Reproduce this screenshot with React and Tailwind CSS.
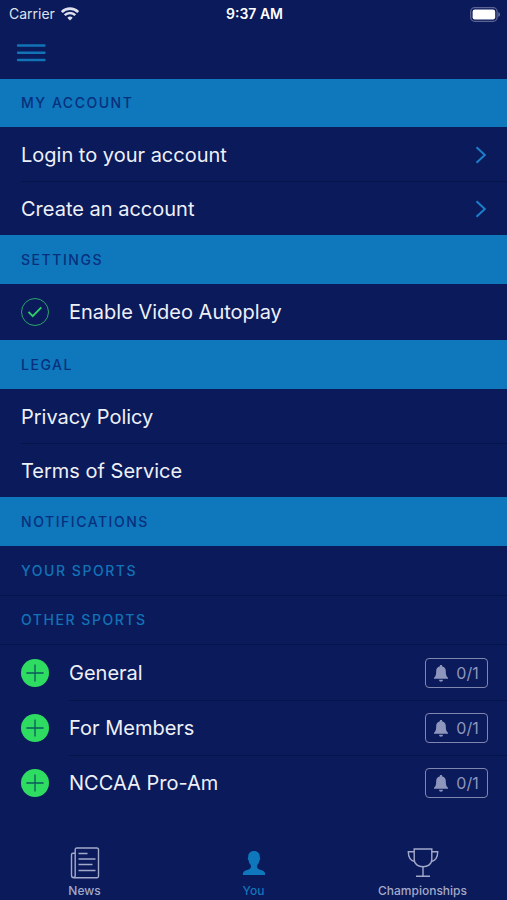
import React from 'react';

const accountLinks = ['Login to your account', 'Create an account'];
const legalLinks = ['Privacy Policy', 'Terms of Service'];
const otherSports = ['General', 'For Members', 'NCCAA Pro-Am'];

const WifiIcon = () => (
    <svg className="w-[18px] h-[14px]" viewBox="0 0 18 14" fill="none" stroke="currentColor" aria-hidden="true">
        <path d="M.8 5a11.600 11.600 0 0 1 16.400 0" strokeWidth="2.600" />
        <path d="M3.700 8.200a7.500 7.500 0 0 1 10.600 0" strokeWidth="2.400" />
        <path d="M9 13.600L6.300 10.800a3.900 3.900 0 0 1 5.400 0z" fill="currentColor" stroke="none" />
    </svg>
);

const BatteryIcon = () => (
    <svg className="w-[30px] h-[15px]" viewBox="0 0 30 15" aria-hidden="true">
        <rect x="0.7" y="0.7" width="26.400" height="13.600" rx="4" fill="none" stroke="#5c6493" strokeWidth="1.300" />
        <rect x="2.600" y="2.600" width="22.600" height="9.800" rx="2.200" fill="#fff" />
        <path d="M28.300 5.200c1.100.3 1.600 1.200 1.600 2.300s-.5 2-1.600 2.300z" fill="#7179a3" />
    </svg>
);

const ChevronIcon = () => (
    <svg className="w-3 h-[18px] text-[#1c7fcb]" viewBox="0 0 12 18" fill="none" stroke="currentColor" strokeWidth="2" aria-hidden="true">
        <path d="M1.500 1.200L9.800 9l-8.300 7.800" />
    </svg>
);

const PlusIcon = () => (
    <svg className="w-7 h-7" viewBox="0 0 28 28" fill="none" aria-hidden="true">
        <circle cx="14" cy="14" r="14" fill="#2fdc62" />
        <path d="M14 5.400v17.200M5.400 14h17.200" stroke="#0d5a5c" strokeWidth="1.300" />
    </svg>
);

const BellIcon = () => (
    <svg className="w-[14px] h-[17px]" viewBox="0 0 14 17" fill="currentColor" aria-hidden="true">
        <path d="M7 0c.8 0 1.300.5 1.300 1.200v.4c2.200.5 3.500 2.100 3.500 4.400 0 3.300.3 5.300 2.200 6.800v.9H0v-.9C1.900 11.300 2.200 9.300 2.200 6c0-2.300 1.300-3.900 3.500-4.400v-.4C5.700.5 6.200 0 7 0z" />
        <path d="M5 14.700h4c0 1.200-.9 2-2 2s-2-.8-2-2z" />
    </svg>
);

const NewsIcon = () => (
    <svg className="w-8 h-8" viewBox="0 0 32 32" fill="none" stroke="currentColor" strokeWidth="1.400" aria-hidden="true">
        <path d="M6.200 6.200H4a1.500 1.500 0 0 0-1.500 1.500v20.600A2.500 2.500 0 0 0 5 30.800h23a1.500 1.500 0 0 0 1.500-1.500V2.500A1.500 1.500 0 0 0 28 1H7.700a1.500 1.500 0 0 0-1.500 1.500v25.800c0 1.600-.7 2.500-1.700 2.500" />
        <path d="M9.500 6.500h9M9.500 12h17M13.500 12h13M9.500 17.500h14M9.500 23.500h17" strokeWidth="1.700" />
    </svg>
);

const PersonIcon = () => (
    <svg className="w-8 h-8" viewBox="0 0 32 32" fill="currentColor" aria-hidden="true">
        <path d="M16 4c4 0 6 2.600 5.800 6.500.7.400.600 2.100-.4 3.100-.4 2-1.200 3.500-2.200 4.500v2.700c.8 1.600 3.300 2 5.300 2.700 2.100.8 2.700 2.300 2.700 4.500H4.800c0-2.200.6-3.700 2.700-4.500 2-.7 4.500-1.100 5.300-2.700v-2.700c-1-1-1.800-2.500-2.200-4.500-1-1-1.100-2.700-.4-3.100C10 6.600 12 4 16 4z" />
    </svg>
);

const TrophyIcon = () => (
    <svg className="w-8 h-8" viewBox="0 0 32 32" fill="none" stroke="currentColor" strokeWidth="1.400" aria-hidden="true">
        <path d="M7.200 2h17.600v10.500c0 4.500-4 7.300-8.800 7.300s-8.800-2.800-8.800-7.300z" />
        <path d="M7.200 4.800H1.300c0 5.200 1.800 8.600 6.200 9.700M24.800 4.800h5.900c0 5.200-1.800 8.600-6.200 9.700" />
        <path d="M16 19.800v9.500M9 29.300h14" />
    </svg>
);

const SectionTitle = ({ children }) => (
    <h2 className="h-[49px] px-[21px] flex items-center bg-[#0f77bc] text-[#07307c] text-sm font-medium tracking-[0.11em]">
        {children}
    </h2>
);

const SubTitle = ({ children }) => (
    <h3 className="h-[49px] px-[21px] flex items-center border-t border-[#07144a] first:border-[#0a1a5a] text-[#1273b7] text-sm font-medium tracking-[0.11em]">
        {children}
    </h3>
);

const LinkList = ({ items, chevron }) => (
    <ul className="pl-[21px]">
        {items.map((item) => (
            <li key={item} className="border-t border-[#07144a] first:border-transparent">
                <a href="#" className="h-[53px] pr-5 flex items-center justify-between">
                    {item}
                    {chevron && <ChevronIcon />}
                </a>
            </li>
        ))}
    </ul>
);

const SportRow = ({ name }) => (
    <li className="flex items-center pl-[21px] group">
        <button type="button" className="shrink-0" aria-label={`Add ${name}`}>
            <PlusIcon />
        </button>
        <div className="ml-5 h-[55px] flex-1 flex items-center justify-between pr-[19px] border-t border-[#07144a] group-first:border-transparent">
            <span>{name}</span>
            <button
                type="button"
                className="w-[63px] h-[30px] flex items-center justify-center gap-2 rounded border-[1px] border-[#7f86b0] text-[#8f96bd] text-base"
                aria-label={`${name} notifications 0/1`}
            >
                <BellIcon />
                0/1
            </button>
        </div>
    </li>
);

const Tab = ({ icon, label, active }) => (
    <a
        href="#"
        className={`flex flex-col items-center text-xs font-medium ${active ? 'text-[#0f77bc]' : 'text-[#a3a9c9]'}`}
        aria-current={active ? 'page' : undefined}
    >
        {icon}
        <span className="mt-1 leading-4">{label}</span>
    </a>
);

const App = () => {
    return (
        <div className="min-h-screen flex flex-col bg-[#0a1a5a] text-[#eef0f8] text-xl font-['Inter','Liberation_Sans',sans-serif]">
            <header className="relative h-[78px] shadow-[0_1px_0_#0a1a5a]">
                <div className="h-7 grid grid-cols-3 items-center pl-[9px] pr-[7px] text-sm text-white">
                    <div className="flex items-center gap-1.5 text-[#dfe2ee]">
                        <span>Carrier</span>
                        <WifiIcon />
                    </div>
                    <span className="text-center font-semibold">9:37 AM</span>
                    <div className="flex justify-end">
                        <BatteryIcon />
                    </div>
                </div>
                <button type="button" className="block ml-4 mt-4 text-[#1273b7]" aria-label="Menu">
                    <svg className="w-[30px] h-[18px]" viewBox="0 0 30 18" stroke="currentColor" strokeWidth="2.400" strokeLinecap="round">
                        <path d="M2 1.500h26.500M2 8.700h26.500M2 16h26.500" />
                    </svg>
                </button>
            </header>

            <main className="flex-1">
                <section>
                    <SectionTitle>MY ACCOUNT</SectionTitle>
                    <LinkList items={accountLinks} chevron />
                </section>

                <section>
                    <SectionTitle>SETTINGS</SectionTitle>
                    <label className="h-14 px-[21px] flex items-center gap-5">
                        <span className="grid place-items-center">
                            <input
                                type="checkbox"
                                defaultChecked
                                className="peer col-start-1 row-start-1 appearance-none w-7 h-7 rounded-full border border-[#2ba56b]"
                            />
                            <svg
                                className="col-start-1 row-start-1 w-4 h-3 pointer-events-none invisible peer-checked:visible"
                                viewBox="0 0 16 12"
                                fill="none"
                                stroke="#2fcf68"
                                strokeWidth="1.900"
                            >
                                <path d="M1.500 5.800l4.200 4.300L14.300 1.300" />
                            </svg>
                        </span>
                        Enable Video Autoplay
                    </label>
                </section>

                <section>
                    <SectionTitle>LEGAL</SectionTitle>
                    <LinkList items={legalLinks} />
                </section>

                <section>
                    <SectionTitle>NOTIFICATIONS</SectionTitle>
                    <div>
                        <SubTitle>YOUR SPORTS</SubTitle>
                        <SubTitle>OTHER SPORTS</SubTitle>
                    </div>
                    <ul className="border-t border-[#07144a]">
                        {otherSports.map((sport) => (
                            <SportRow key={sport} name={sport} />
                        ))}
                    </ul>
                </section>
            </main>

            <nav className="grid grid-cols-3 pt-4 pb-px">
                <Tab icon={<NewsIcon />} label="News" />
                <Tab icon={<PersonIcon />} label="You" active />
                <Tab icon={<TrophyIcon />} label="Championships" />
            </nav>
        </div>
    );
};

export default App;
